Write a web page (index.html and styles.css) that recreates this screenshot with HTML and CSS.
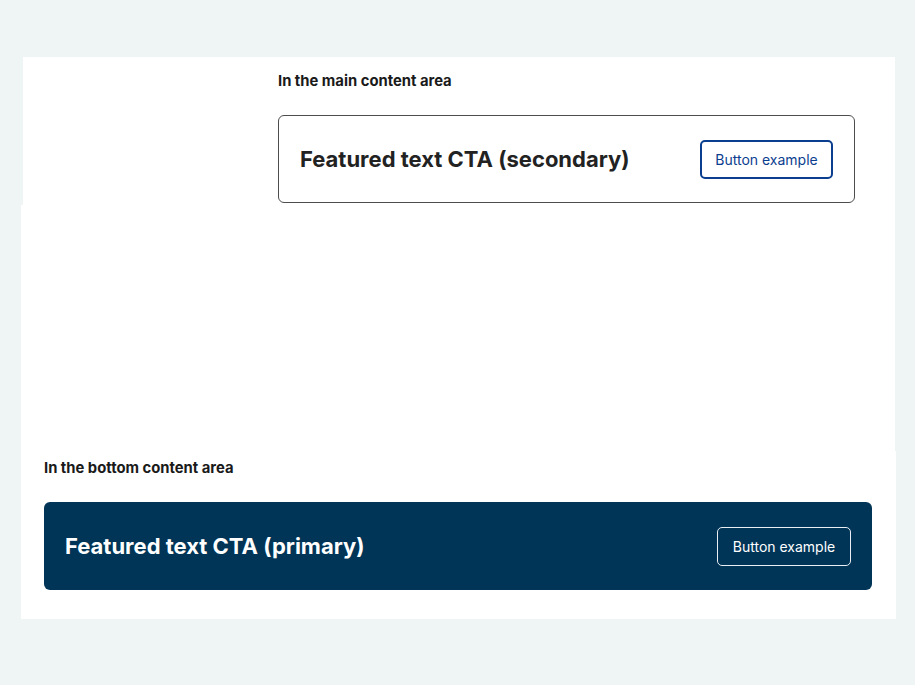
FILE: index.html
```html
<!DOCTYPE html>
<html>
<head>
<meta charset="utf-8">
<link rel="stylesheet" href="styles.css">
</head>
<body>
<div class="page">
  <section class="top">
    <aside class="side"></aside>
    <main class="main">
      <h2 class="label">In the main content area</h2>
      <div class="cta cta-secondary">
        <p class="cta-title">Featured text CTA (secondary)</p>
        <a class="btn btn-secondary" href="#">Button example</a>
      </div>
    </main>
  </section>
  <section class="middle"></section>
  <section class="bottom">
    <h2 class="label">In the bottom content area</h2>
    <div class="cta cta-primary">
      <p class="cta-title">Featured text CTA (primary)</p>
      <a class="btn btn-primary" href="#">Button example</a>
    </div>
  </section>
</div>
</body>
</html>
```
FILE: styles.css
```css
* { box-sizing: border-box; }
html, body { margin: 0; padding: 0; }
body {
  background: #eff4f4;
  font-family: Inter, "Noto Sans", sans-serif;
  color: #1a1a1a;
}
.page {
  padding-top: 57px;
  height: 685px;
}
.top {
  display: flex;
  margin-left: 23px;
  width: 872px;
  height: 148px;
  background: #fff;
}
.side { width: 255px; flex: none; }
.main {
  flex: 1;
  padding: 14px 40px 0 0;
}
.label {
  margin: 0;
  font-size: 14.8px;
  font-weight: 700;
  line-height: 20px;
  letter-spacing: 0;
  color: #1a1a1a;
}
.main .label { margin-bottom: 24px; }
.cta {
  display: flex;
  align-items: center;
  justify-content: space-between;
  height: 88px;
  padding: 0 21px;
  border-radius: 6px;
}
.cta-title {
  margin: 0;
  font-size: 22px;
  font-weight: 700;
  letter-spacing: 0;
}
.cta-secondary {
  border: 1px solid #4d4d4d;
}
.cta-secondary .cta-title { color: #222; }
.btn {
  display: flex;
  align-items: center;
  justify-content: center;
  height: 39px;
  border-radius: 5px;
  font-size: 14px;
  text-decoration: none;
}
.btn-secondary {
  width: 133px;
  border: 2px solid #0b3e8f;
  color: #0b3e8f;
}
.middle {
  margin-left: 21px;
  width: 874px;
  height: 246px;
  background: #fff;
}
.bottom {
  margin-left: 21px;
  width: 875px;
  height: 168px;
  background: #fff;
  padding: 7px 24px 0 23px;
}
.bottom .label { margin-bottom: 24px; }
.cta-primary {
  background: #003557;
}
.cta-primary .cta-title { color: #fff; }
.btn-primary {
  width: 134px;
  border: 1.5px solid #e8eef2;
  color: #fff;
}
```
